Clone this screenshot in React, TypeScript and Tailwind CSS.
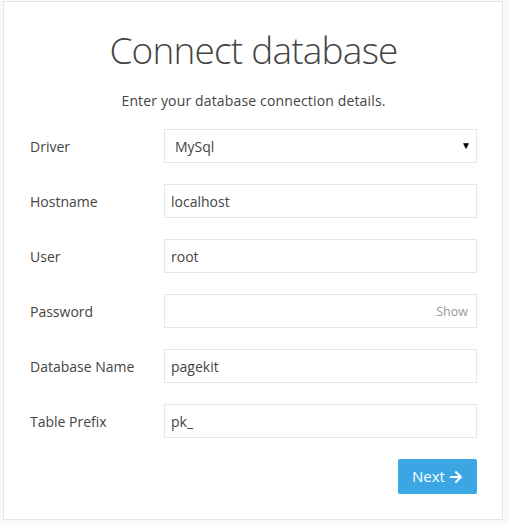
import React from 'react';

const fields = [
  { label: 'Hostname', value: 'localhost' },
  { label: 'User', value: 'root' },
];

const fields2 = [
  { label: 'Database Name', value: 'pagekit' },
  { label: 'Table Prefix', value: 'pk_' },
];

const Row: React.FC<{ label: string; children: React.ReactNode }> = ({ label, children }) => (
  <div className="flex items-center">
    <label className="w-[134px] shrink-0 text-[14px] text-[#444]">{label}</label>
    <div className="flex-1">{children}</div>
  </div>
);

const TextInput: React.FC<{ value: string }> = ({ value }) => (
  <input
    defaultValue={value}
    className="h-[34px] w-full border border-[#e5e5e5] bg-white px-[6px] text-[14px] text-[#444] outline-none"
  />
);

export default function App() {
  return (
    <div className="min-h-[525px] bg-[#f9f9f9] pl-[3px] pt-[1px]" style={{ fontFamily: '"Open Sans", sans-serif' }}>
      <div className="h-[519px] w-[500px] border border-[#e5e5e5] bg-white pl-[26px] pr-[25px]">
        <h1 className="mt-[24px] text-center text-[37px] font-light leading-[48px] tracking-[-0.8px] text-[#444]">Connect database</h1>
        <p className="mt-[17px] text-center text-[14px] leading-[20px] tracking-[0.15px] text-[#444]">
          Enter your database connection details.
        </p>
        <form className="mt-[18px] flex flex-col gap-[21px]">
          <Row label="Driver">
            <div className="relative">
              <select className="h-[34px] w-full appearance-none border border-[#e5e5e5] bg-white pl-[10px] text-[14px] text-[#444] outline-none">
                <option>MySql</option>
                <option>SQLite</option>
              </select>
              <span className="pointer-events-none absolute right-[6px] top-[9px] text-[10px] text-black">▼</span>
            </div>
          </Row>
          {fields.map((f) => (
            <Row key={f.label} label={f.label}>
              <TextInput value={f.value} />
            </Row>
          ))}
          <Row label="Password">
            <div className="relative">
              <input type="password" className="h-[34px] w-full border border-[#e5e5e5] bg-white px-[6px] pr-[50px] text-[14px] outline-none" />
              <span className="absolute right-[9px] top-[9px] text-[12.5px] text-[#999]">Show</span>
            </div>
          </Row>
          {fields2.map((f) => (
            <Row key={f.label} label={f.label}>
              <TextInput value={f.value} />
            </Row>
          ))}
          <div className="flex justify-end">
            <button
              type="button"
              className="flex h-[35px] w-[79px] items-center justify-center gap-[4px] rounded-[2px] bg-[#3aa7e4] text-[15px] text-white"
            >
              Next
              <svg width="14" height="14" viewBox="0 0 448 512" fill="currentColor">
                <path d="M190.5 66.9l22.2-22.2c9.4-9.4 24.6-9.4 33.9 0L441 239c9.4 9.4 9.4 24.6 0 33.9L246.6 467.3c-9.4 9.4-24.6 9.4-33.9 0l-22.2-22.2c-9.5-9.5-9.3-25 .4-34.3L311.4 296H24c-13.3 0-24-10.7-24-24v-32c0-13.3 10.7-24 24-24h287.4L190.9 101.2c-9.8-9.3-10-24.8-.4-34.3z" />
              </svg>
            </button>
          </div>
        </form>
      </div>
    </div>
  );
}
